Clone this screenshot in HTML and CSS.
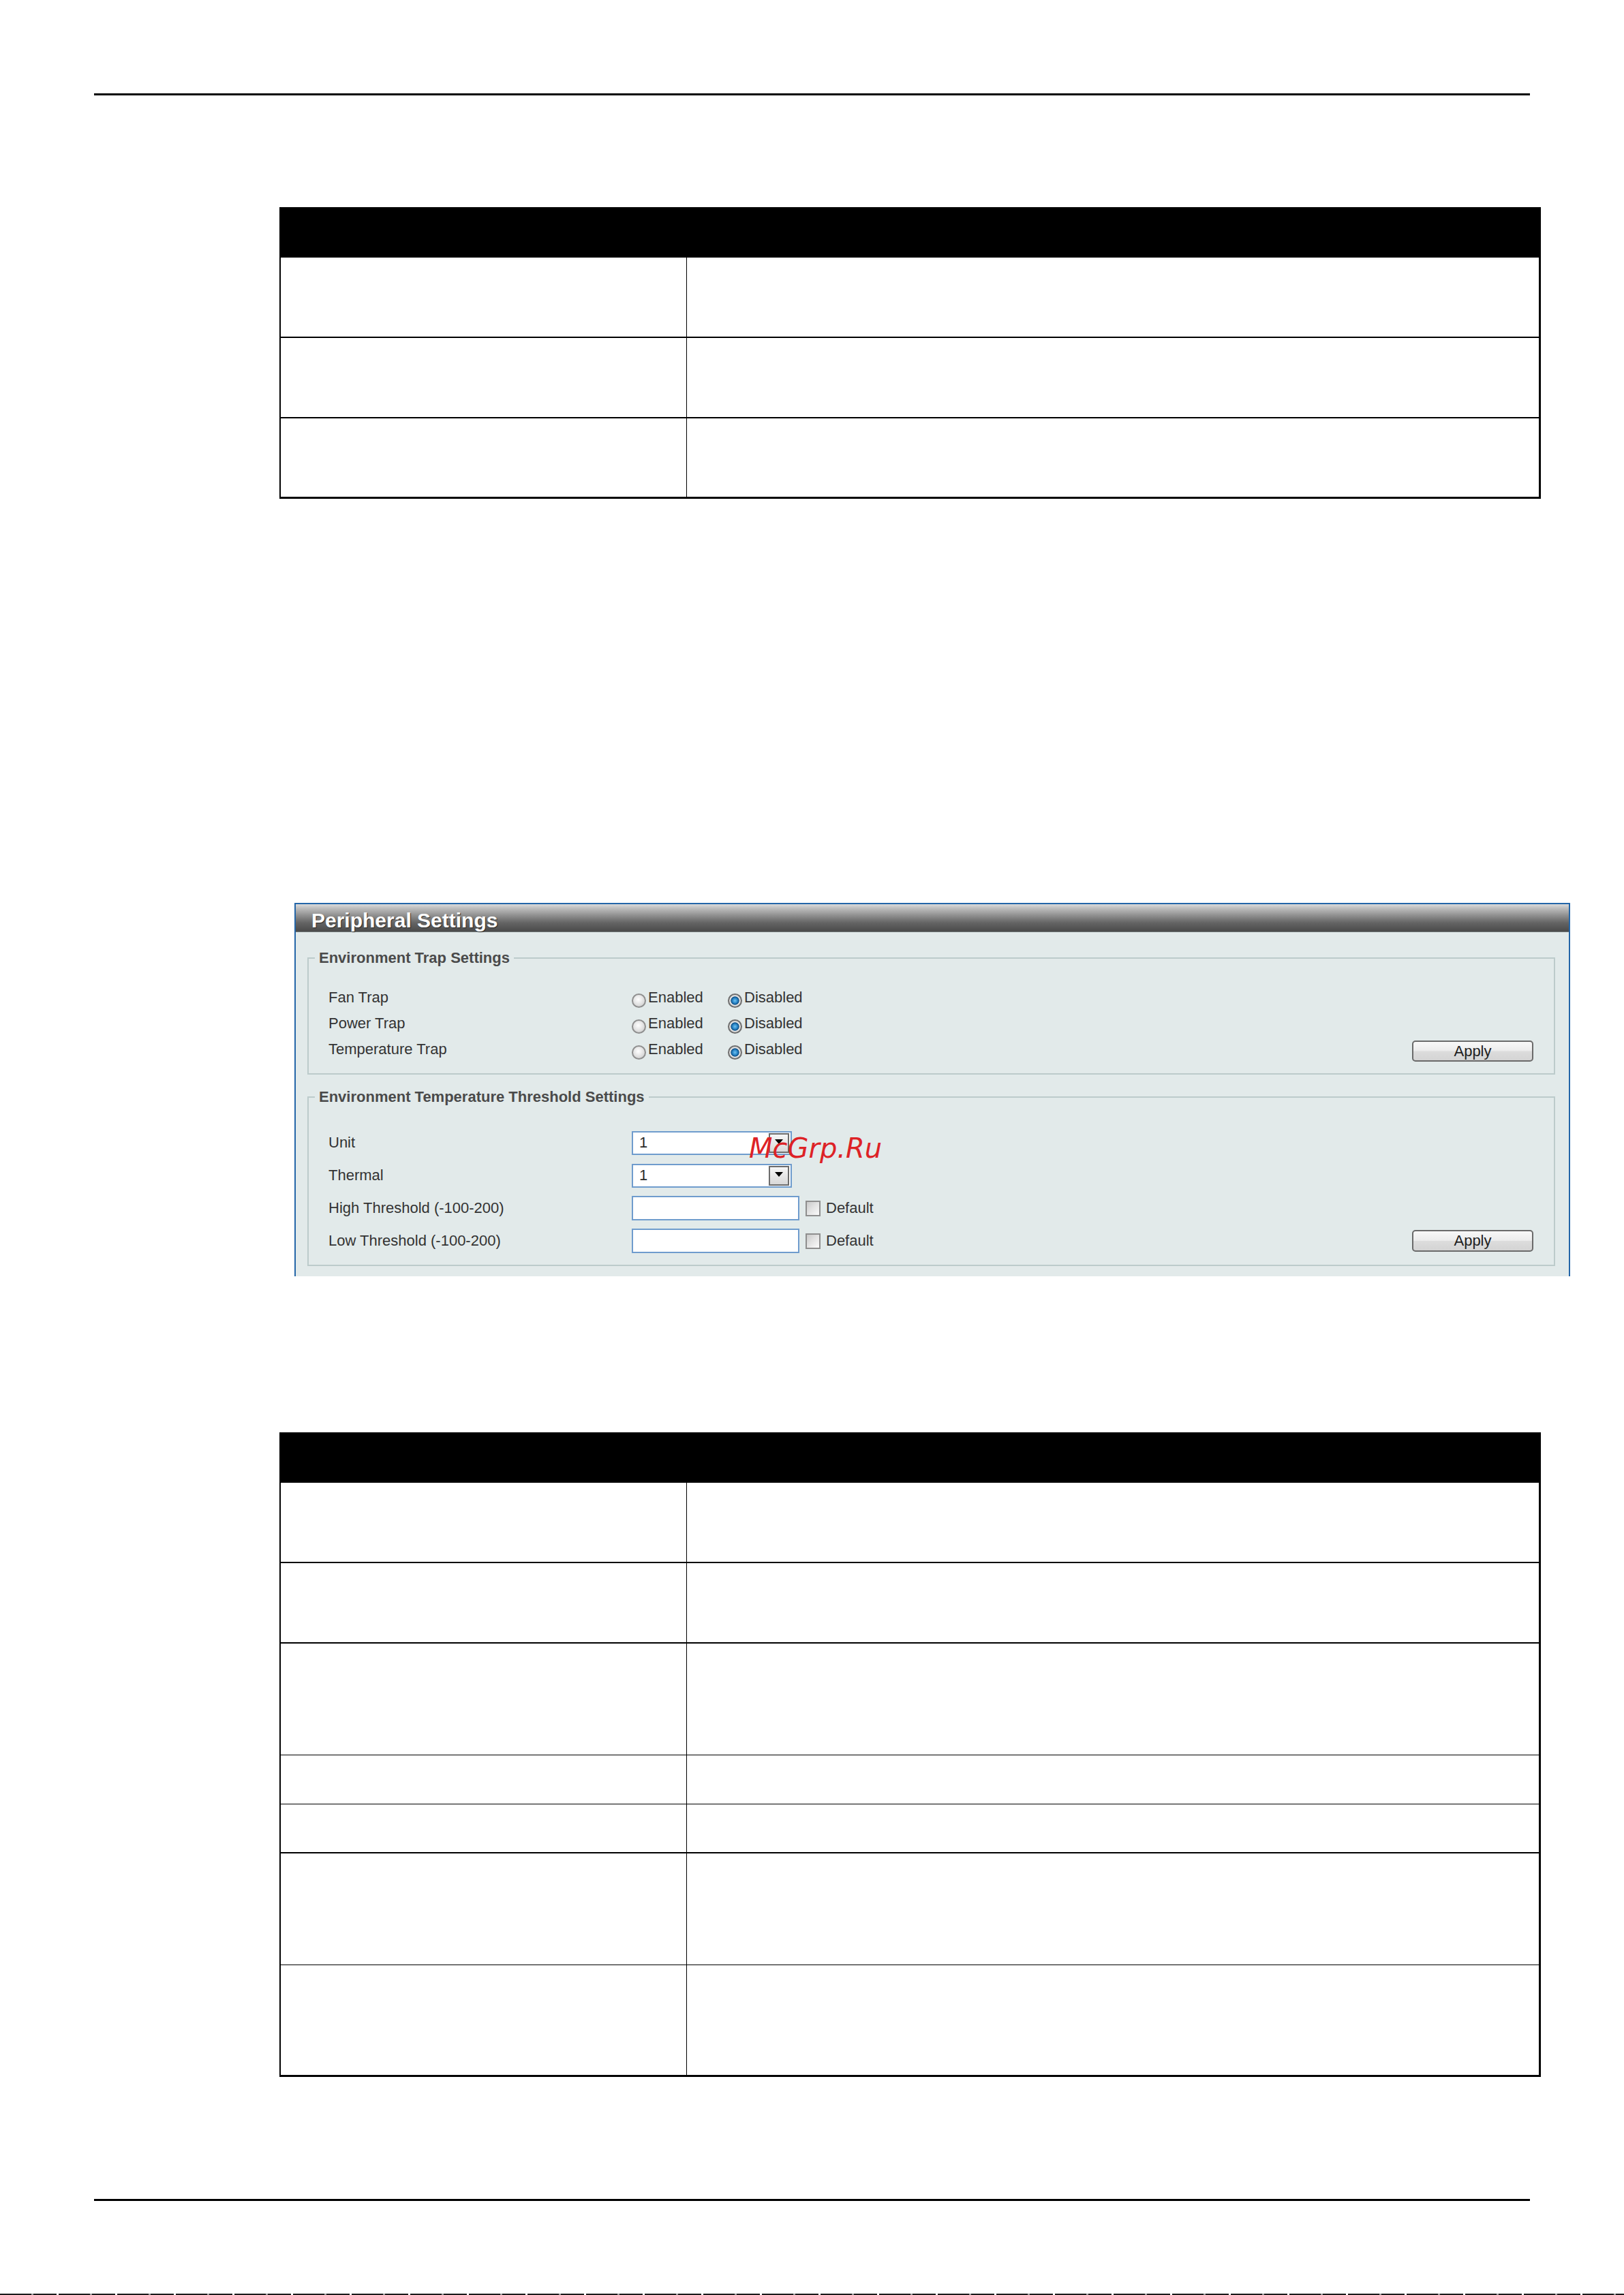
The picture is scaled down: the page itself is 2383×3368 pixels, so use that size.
FILE: index.html
```html
<!DOCTYPE html>
<html lang="en">
<head>
<meta charset="utf-8">
<title>Peripheral Settings</title>
<link rel="stylesheet" href="styles.css">
</head>
<body>
<div class="page">
  <div class="rule rule-top"></div>

  <div class="spec-table spec-table-1">
    <div class="spec-head"></div>
    <div class="spec-row lines-2"><div class="spec-cell"></div><div class="spec-cell"></div></div>
    <div class="spec-row lines-2"><div class="spec-cell"></div><div class="spec-cell"></div></div>
    <div class="spec-row lines-2 last"><div class="spec-cell"></div><div class="spec-cell"></div></div>
  </div>

  <div class="panel">
    <div class="panel-title">Peripheral Settings</div>
    <div class="panel-body">
      <fieldset class="group">
        <legend class="group-legend">Environment Trap Settings</legend>
        <div class="group-body">
          <div class="trap-row">
            <span class="row-label">Fan Trap</span>
            <span class="option"><span class="radio"></span>Enabled</span>
            <span class="option"><span class="radio checked"></span>Disabled</span>
          </div>
          <div class="trap-row">
            <span class="row-label">Power Trap</span>
            <span class="option"><span class="radio"></span>Enabled</span>
            <span class="option"><span class="radio checked"></span>Disabled</span>
          </div>
          <div class="trap-row">
            <span class="row-label">Temperature Trap</span>
            <span class="option"><span class="radio"></span>Enabled</span>
            <span class="option"><span class="radio checked"></span>Disabled</span>
            <button class="btn btn-trap" type="button">Apply</button>
          </div>
        </div>
      </fieldset>

      <fieldset class="group group-2">
        <legend class="group-legend">Environment Temperature Threshold Settings</legend>
        <div class="group-body group-body-2">
          <div class="thr-row">
            <span class="row-label">Unit</span>
            <div class="select"><span class="select-value">1</span><span class="select-arrow"><span class="caret"></span></span></div>
          </div>
          <div class="thr-row">
            <span class="row-label">Thermal</span>
            <div class="select"><span class="select-value">1</span><span class="select-arrow"><span class="caret"></span></span></div>
          </div>
          <div class="thr-row">
            <span class="row-label">High Threshold (-100-200)</span>
            <input class="field" type="text" value="">
            <span class="checkbox"></span><span class="check-text">Default</span>
          </div>
          <div class="thr-row">
            <span class="row-label">Low Threshold (-100-200)</span>
            <input class="field" type="text" value="">
            <span class="checkbox"></span><span class="check-text">Default</span>
            <button class="btn btn-thr" type="button">Apply</button>
          </div>
        </div>
      </fieldset>
    </div>
  </div>

  <div class="spec-table spec-table-2">
    <div class="spec-head"></div>
    <div class="spec-row lines-2"><div class="spec-cell"></div><div class="spec-cell"></div></div>
    <div class="spec-row lines-2"><div class="spec-cell"></div><div class="spec-cell"></div></div>
    <div class="spec-row lines-3 thin"><div class="spec-cell"></div><div class="spec-cell"></div></div>
    <div class="spec-row lines-1 thin"><div class="spec-cell"></div><div class="spec-cell"></div></div>
    <div class="spec-row lines-1"><div class="spec-cell"></div><div class="spec-cell"></div></div>
    <div class="spec-row lines-3 thin"><div class="spec-cell"></div><div class="spec-cell"></div></div>
    <div class="spec-row lines-3 last"><div class="spec-cell"></div><div class="spec-cell"></div></div>
  </div>

  <div class="rule rule-bottom"></div>
  <div class="page-edge"></div>

  <div class="watermark">McGrp.Ru</div>
</div>
</body>
</html>
```

FILE: styles.css
```css
html, body {
  margin: 0;
  padding: 0;
  background: #ffffff;
}

.page {
  position: relative;
  width: 2383px;
  height: 3368px;
  overflow: hidden;
  background: #ffffff;
  font-family: "Liberation Sans", Arial, sans-serif;
}

/* page rules */
.rule {
  width: 2107px;
  height: 3px;
  margin-left: 138px;
  background: #000000;
}
.rule-top { margin-top: 137px; }
.rule-bottom { margin-top: 179px; }

.page-edge {
  margin-top: 136px;
  height: 2px;
  background: repeating-linear-gradient(90deg, #1a1a1a 0 46px, #9a9a9a 46px 49px, #1a1a1a 49px 83px, #ffffff 83px 86px);
}

/* spec tables */
.spec-table {
  width: 1851px;
  margin-left: 410px;
  box-sizing: border-box;
  border-left: 2px solid #000000;
  border-right: 3px solid #000000;
}
.spec-table-1 { margin-top: 164px; }
.spec-table-2 { margin-top: 229px; }

.spec-head {
  height: 74px;
  background: #000000;
}

.spec-row {
  display: grid;
  grid-template-columns: 595px 1fr;
  box-sizing: border-box;
  border-bottom: 2px solid #000000;
}
.spec-row.thin { border-bottom-width: 1.5px; }
.spec-row.last { border-bottom-width: 3px; }
.spec-row.lines-1 { height: 72px; }
.spec-row.lines-2 { height: 118px; }
.spec-row.lines-3 { height: 164px; }

.spec-cell + .spec-cell {
  border-left: 1px solid #000000;
}

/* web UI panel */
.panel {
  width: 1872px;
  height: 548px;
  margin-top: 593px;
  margin-left: 432px;
  box-sizing: border-box;
  border: 2px solid #2466a8;
  border-bottom: 0;
  background: #e2eaea;
}

.panel-title {
  height: 41px;
  box-sizing: border-box;
  padding: 7px 0 0 23px;
  line-height: 34px;
  font-size: 30px;
  font-weight: bold;
  color: #ffffff;
  text-shadow: 1px 1px 1px #2a2a2a;
  background: linear-gradient(#dadada 0%, #b8b8b8 18%, #8e8e8e 42%, #646464 68%, #4a4a4a 100%);
  border-bottom: 1px solid #6d7575;
}

.panel-body {
  padding: 25px 20px 0 17px;
}

.group {
  margin: 0;
  padding: 0;
  border: 2px solid #bccbcb;
  min-width: 0;
}
.group-2 { margin-top: 20px; }

.group-legend {
  margin-left: 9px;
  padding: 0 6px;
  font-size: 22px;
  line-height: 26px;
  font-weight: bold;
  color: #4a4a4a;
}

.group-body {
  padding: 26px 30px 16px 29px;
  font-size: 22px;
  color: #333333;
}
.group-body-2 {
  padding-top: 30px;
  padding-bottom: 11px;
}

.row-label {
  flex: none;
  width: 445px;
}

.trap-row {
  display: flex;
  align-items: flex-start;
  height: 38px;
  line-height: 38px;
}

.option {
  display: inline-flex;
  align-items: flex-start;
  width: 141px;
  flex: none;
}

.radio {
  flex: none;
  width: 21px;
  height: 21px;
  margin-top: 13px;
  margin-right: 3px;
  box-sizing: border-box;
  border-radius: 50%;
  border: 2px solid #8f8f8f;
  background: radial-gradient(circle at 45% 40%, #ffffff 0%, #e6e6e6 45%, #c4c4c4 100%);
}
.radio.checked {
  border: 2px solid #6e6e6e;
  background:
    radial-gradient(circle at 50% 50%, #6ec1f0 0%, #2a86c8 30%, #0d4f86 48%, rgba(0,0,0,0) 54%),
    radial-gradient(circle at 50% 50%, #f4f4f4 0%, #e0e0e0 60%, #b0b0b0 100%);
}

.btn {
  margin: 0 0 0 auto;
  width: 178px;
  padding: 0;
  box-sizing: border-box;
  border: 2px solid #6a6a6a;
  border-radius: 5px;
  background: linear-gradient(#f8f8f8 0%, #ececec 48%, #dcdcdc 52%, #d4d4d4 100%);
  font-family: "Liberation Sans", Arial, sans-serif;
  font-size: 22px;
  color: #1e1e1e;
}
.btn-trap {
  height: 31px;
  line-height: 27px;
  margin-top: 6px;
}
.btn-thr {
  height: 32px;
  line-height: 28px;
}

.thr-row {
  display: flex;
  align-items: center;
  height: 48px;
}

.select {
  display: flex;
  align-items: center;
  width: 235px;
  height: 35px;
  box-sizing: border-box;
  border: 2px solid #6f9ccd;
  background: #ffffff;
}
.select-value {
  flex: 1;
  padding-left: 9px;
  color: #2a2a2a;
}
.select-arrow {
  display: flex;
  align-items: center;
  justify-content: center;
  width: 30px;
  height: 29px;
  margin-right: 2px;
  box-sizing: border-box;
  border: 2px solid #6c6c6c;
  background: linear-gradient(#f6f6f6, #d8d8d8);
}
.caret {
  width: 0;
  height: 0;
  margin-top: -3px;
  border-left: 6px solid transparent;
  border-right: 6px solid transparent;
  border-top: 7px solid #000000;
}

.field {
  width: 246px;
  height: 36px;
  margin: 0;
  padding: 0 8px;
  box-sizing: border-box;
  border: 2px solid #6f9ccd;
  background: #ffffff;
  font-family: "Liberation Sans", Arial, sans-serif;
  font-size: 22px;
}

.checkbox {
  flex: none;
  width: 22px;
  height: 23px;
  margin-left: 9px;
  box-sizing: border-box;
  border: 2px solid #8e8e8e;
  background: linear-gradient(135deg, #cacaca 0%, #e4e4e4 50%, #fbfbfb 100%);
}
.check-text {
  margin-left: 8px;
  color: #333333;
}

/* watermark over the screenshot */
.watermark {
  position: absolute;
  left: 1099px;
  top: 1665px;
  font-family: "DejaVu Sans", Verdana, sans-serif;
  font-style: italic;
  font-size: 40px;
  line-height: 40px;
  color: #dd2226;
  white-space: nowrap;
}
```
